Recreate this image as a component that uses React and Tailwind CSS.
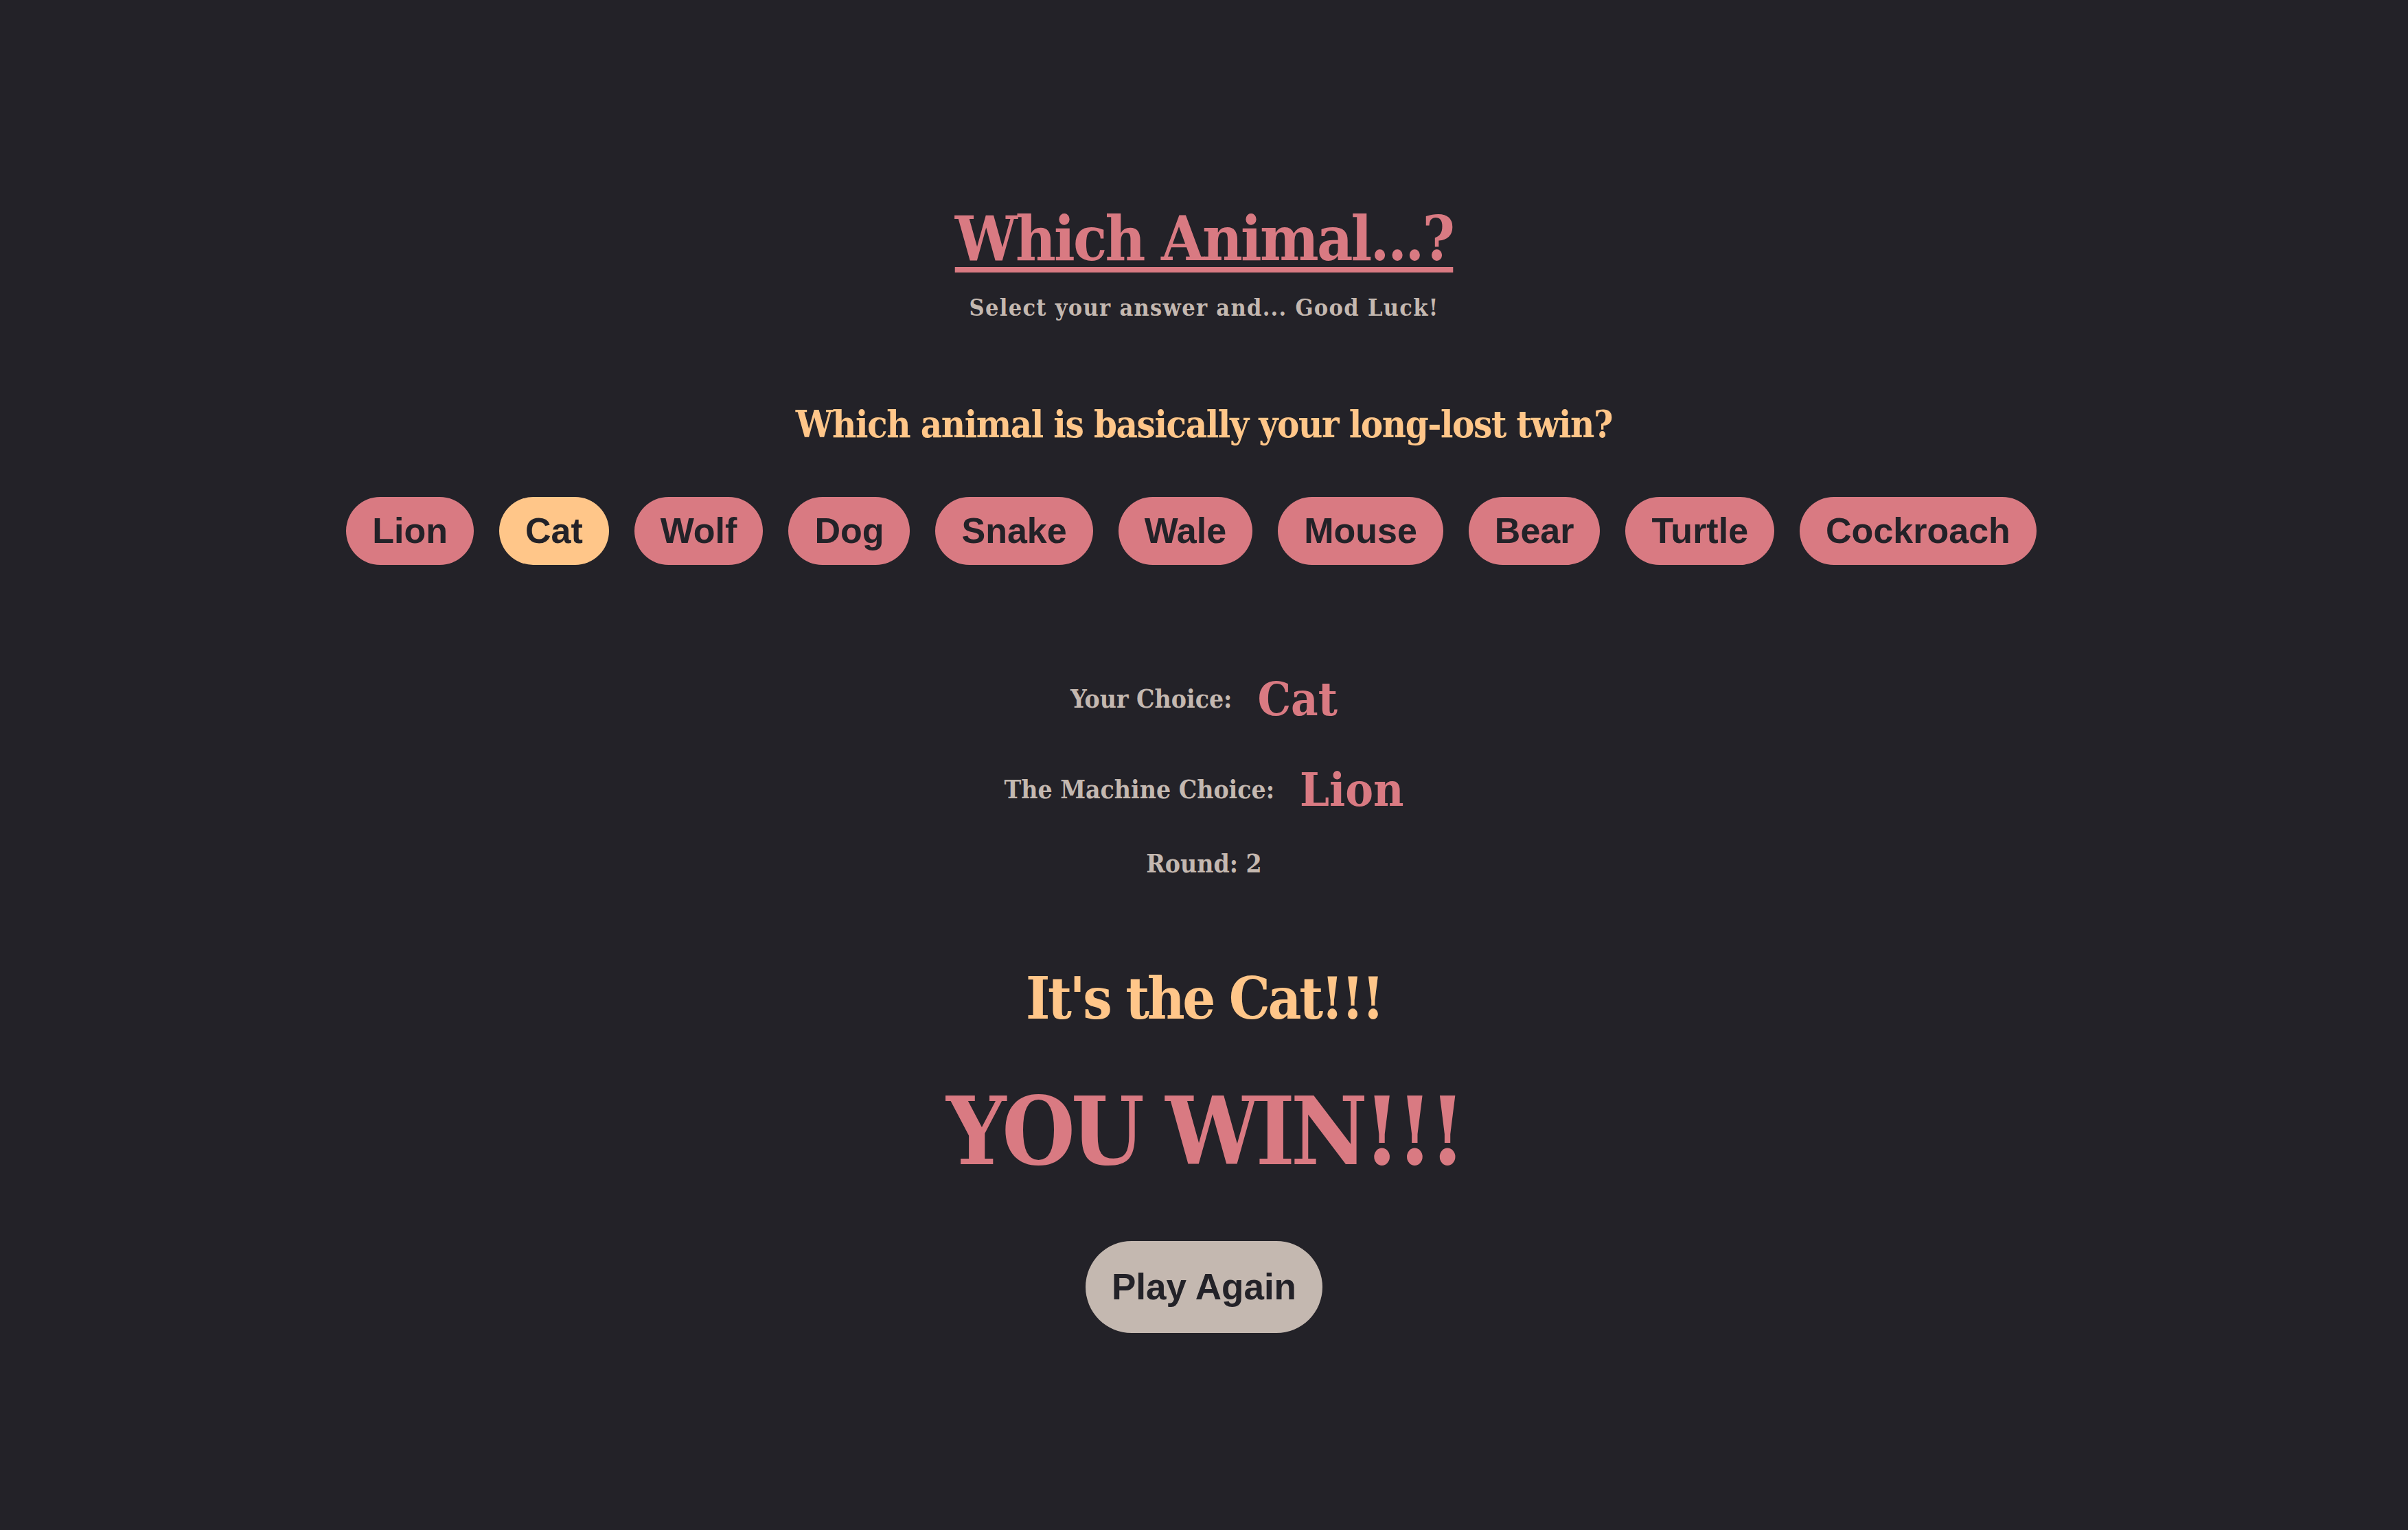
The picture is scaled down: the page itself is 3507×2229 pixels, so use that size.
import { useState } from "react";

const animals = ["Lion", "Cat", "Wolf", "Dog", "Snake", "Wale", "Mouse", "Bear", "Turtle", "Cockroach"];

const slab = { fontFamily: '"DejaVu Serif Condensed", "DejaVu Serif", "Liberation Serif", serif' };

function App() {
  const [choice, setChoice] = useState("Cat");
  const machine = "Lion";

  return (
    <div className="min-h-[2229px] w-full bg-[#232228] flex flex-col items-center text-center font-stretch-condensed" style={slab}>
      <h1 className="mt-[293px] text-[90px] leading-[108px] font-bold tracking-[-2.8px] text-[#d97a82] underline decoration-[8px] underline-offset-[10px]">
        Which Animal...?
      </h1>
      <p className="mt-[27px] text-[34px] leading-[41px] font-bold tracking-[1.3px] text-[#c4b8b0]">
        Select your answer and... Good Luck!
      </p>

      <h2 className="mt-[117px] text-[54px] leading-[65px] font-bold tracking-[-1.4px] text-[#ffc689]">
        Which animal is basically your long-lost twin?
      </h2>

      <div className="mt-[73px] flex justify-center font-stretch-normal">
        {animals.map((animal) => (
          <button
            key={animal}
            onClick={() => setChoice(animal)}
            className={`mr-[37px] rounded-full px-[38px] py-[20px] text-[52px] leading-[59px] font-bold text-[#232228] font-['Liberation_Sans',Arial,sans-serif] ${
              choice === animal ? "bg-[#ffc689]" : "bg-[#d97a82]"
            }`}
          >
            {animal}
          </button>
        ))}
      </div>

      <div className="mt-[154px] flex items-center gap-[37px]">
        <span className="text-[37px] leading-[44px] font-bold text-[#c4b8b0]">Your Choice:</span>
        <span className="text-[68px] leading-[82px] font-bold text-[#d97a82]">{choice}</span>
      </div>
      <div className="mt-[50px] flex items-center gap-[37px]">
        <span className="text-[37px] leading-[44px] font-bold text-[#c4b8b0]">The Machine Choice:</span>
        <span className="text-[68px] leading-[82px] font-bold text-[#d97a82]">{machine}</span>
      </div>
      <p className="mt-[45px] text-[37px] leading-[44px] font-bold text-[#c4b8b0]">Round: 2</p>

      <h2 className="mt-[124px] text-[84px] leading-[101px] font-bold tracking-[-3.4px] text-[#ffc689]">
        It's the {choice}!!!
      </h2>
      <h1 className="mt-[62px] text-[136px] leading-[163px] font-bold tracking-[-6px] text-[#d97a82]">YOU WIN!!!</h1>

      <button className="mt-[78px] rounded-full bg-[#c4b8b0] px-[38px] py-[36px] text-[53px] leading-[62px] font-bold text-[#232228] font-stretch-normal font-['Liberation_Sans',Arial,sans-serif]">
        Play Again
      </button>
    </div>
  );
}

export default App;
